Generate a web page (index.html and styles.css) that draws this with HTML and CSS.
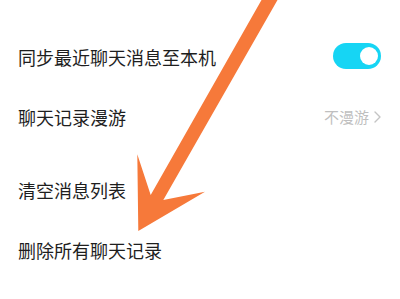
FILE: index.html
```html
<!DOCTYPE html>
<html lang="zh-CN">
<head>
<meta charset="utf-8">
<title>聊天设置</title>
<link rel="stylesheet" href="styles.css">
</head>
<body>
<div class="page">
  <section class="group">
    <div class="row">
      <span class="label">同步最近聊天消息至本机</span>
      <span class="toggle"><span class="knob"></span></span>
    </div>
    <div class="row">
      <span class="label">聊天记录漫游</span>
      <span class="value">不漫游<svg class="chev" width="7" height="12" viewBox="0 0 7 12"><path d="M1 1 L6 6 L1 11" fill="none" stroke="#c4c4c4" stroke-width="1.4" stroke-linecap="round" stroke-linejoin="round"/></svg></span>
    </div>
  </section>
  <section class="group">
    <div class="row">
      <span class="label">清空消息列表</span>
    </div>
    <div class="row">
      <span class="label">删除所有聊天记录</span>
    </div>
  </section>
  <svg class="arrow" width="400" height="299" viewBox="0 0 400 299">
    <polygon points="261.5,0 277.5,0 163.3,200 205,191.7 138.3,231 137.3,154.3 150.7,195 " fill="#f6793a"/>
  </svg>
</div>
</body>
</html>
```

FILE: styles.css
```css
html, body {
  margin: 0;
  padding: 0;
  background: #ffffff;
}
.page {
  position: relative;
  width: 400px;
  height: 299px;
  overflow: hidden;
  padding-top: 27px;
  box-sizing: border-box;
  font-family: "Noto Sans CJK SC", "Noto Sans", sans-serif;
}
.group + .group {
  margin-top: 12.5px;
}
.row {
  height: 60px;
  display: flex;
  align-items: center;
  justify-content: space-between;
  padding: 0 19px 0 18px;
}
.label {
  font-size: 18px;
  color: #1e1e1e;
  line-height: 24px;
}
.toggle {
  width: 48px;
  height: 26px;
  border-radius: 13px;
  background: #16d5f4;
  display: flex;
  align-items: center;
  justify-content: flex-end;
  padding-right: 3px;
  box-sizing: border-box;
  margin-top: -2px;
}
.knob {
  width: 18px;
  height: 18px;
  border-radius: 50%;
  background: #ffffff;
}
.value {
  display: flex;
  align-items: center;
  gap: 5px;
  font-size: 15px;
  color: #bfbfbf;
  line-height: 20px;
}
.chev {
  display: block;
}
.arrow {
  position: absolute;
  left: 0;
  top: 0;
}
```
